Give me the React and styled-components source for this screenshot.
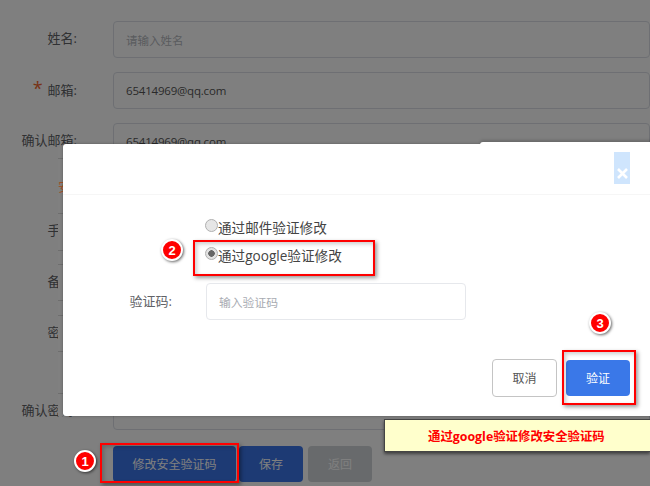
import React from "react"
import styled, { createGlobalStyle } from "styled-components"

const FONT = `"Open Sans", "Noto Sans CJK SC", "Liberation Sans", sans-serif`

const GlobalStyle = createGlobalStyle`
  html, body {
    margin: 0;
    padding: 0;
    width: 650px;
    height: 486px;
    overflow: hidden;
    background: #fff;
    font-family: ${FONT};
  }
  * {
    box-sizing: border-box;
  }
`

const Page = styled.div`
  position: relative;
  width: 650px;
  height: 486px;
  overflow: hidden;
`

const Form = styled.div`
  display: flex;
  flex-direction: column;
  gap: 14px;
  padding-top: 21px;
`

const Row = styled.div`
  display: flex;
  align-items: center;
  height: 37px;
  margin-top: ${(p) => p.$mt || 0}px;
`

const Label = styled.label`
  width: 77px;
  flex-shrink: 0;
  margin-top: -4px;
  text-align: right;
  font-size: 13px;
  color: #606266;
  white-space: nowrap;
`

const Star = styled.span`
  color: #f0662e;
  font-size: 18px;
  line-height: 1;
  margin-right: 5px;
`

const Field = styled.div`
  flex: 1;
  height: 37px;
  margin-left: 36px;
  padding-left: 12px;
  display: flex;
  align-items: center;
  border: 1px solid #dcdfe6;
  border-radius: 4px;
  font-size: 11.5px;
  letter-spacing: ${(p) => (p.$placeholder ? 0 : -0.2)}px;
  color: ${(p) => (p.$placeholder ? "#b4b7bd" : "#555")};
`

const Actions = styled.div`
  display: flex;
  gap: 3px;
  margin: 2px 0 0 113px;
`

const Button = styled.div`
  height: 36px;
  width: ${(p) => p.$w}px;
  margin-left: ${(p) => p.$ml || 0}px;
  border-radius: 4px;
  display: flex;
  align-items: center;
  justify-content: center;
  font-size: 12px;
  color: #fff;
  background: ${(p) => p.$bg};
`

const Overlay = styled.div`
  position: absolute;
  inset: 0;
  background: rgba(0, 0, 0, 0.5);
`

/* grey band down the left of the dialog, it cuts the labels off at x=58 */
const EdgeStrip = styled.div`
  position: absolute;
  left: 58px;
  top: 147px;
  width: 5px;
  height: 269px;
  overflow: hidden;
  background: #808080;
`

const Tick = styled.div`
  position: absolute;
  left: 0;
  top: ${(p) => p.$y - 147}px;
  width: 5px;
  height: 1px;
  background: #6e6e6e;
`

const EdgeGlyph = styled.span`
  position: absolute;
  left: 0;
  top: 30px;
  font-size: 13px;
  line-height: 18px;
  color: #a0522a;
`

const Modal = styled.div`
  position: absolute;
  left: 63px;
  top: 144px;
  width: 600px;
  height: 272px;
  background: #fff;
  border-radius: 3px;
  box-shadow: 0 0 3px rgba(0, 0, 0, 0.3);
  display: flex;
  flex-direction: column;
  &::before {
    content: "";
    position: absolute;
    left: 417px;
    right: 0;
    top: -2px;
    height: 3px;
    background: #fff;
    border-radius: 3px 0 0 0;
    box-shadow: 0 -2px 3px rgba(0, 0, 0, 0.18);
  }
`

const ModalHeader = styled.div`
  height: 51px;
  flex-shrink: 0;
  border-bottom: 1px solid #f6f6f6;
  display: flex;
  justify-content: flex-end;
  padding: 8px 33px 0 0;
`

const Close = styled.div`
  width: 16px;
  height: 32px;
  background: #cfe5fd;
  color: #fff;
  display: flex;
  align-items: flex-end;
  justify-content: center;
  padding-bottom: 4px;
`

const ModalBody = styled.div`
  flex: 1;
  padding: 18px 20px 0 0;
  display: flex;
  flex-direction: column;
`

const RadioRow = styled.div`
  display: flex;
  align-items: center;
  height: 28px;
  margin-left: 142px;
  font-size: 13.6px;
  color: #444;
`

const Radio = styled.span`
  width: 13px;
  height: 13px;
  border-radius: 50%;
  border: 1px solid #b0b0b0;
  background: ${(p) =>
    p.$on ? "radial-gradient(circle, #666 0 3px, #e2e2e2 3.5px)" : "#e6e6e6"};
  margin-top: -3px;
`

const CodeRow = styled.div`
  display: flex;
  align-items: center;
  margin-top: 14px;
`

const CodeLabel = styled.label`
  width: 109px;
  margin-top: -2px;
  text-align: right;
  font-size: 13px;
  color: #606266;
`

const CodeInput = styled.div`
  width: 260px;
  height: 37px;
  margin-left: 34px;
  padding-left: 12px;
  display: flex;
  align-items: center;
  border: 1px solid #e6e8ec;
  border-radius: 4px;
  font-size: 11.8px;
  color: #a8abb2;
`

const ModalFooter = styled.div`
  display: flex;
  align-items: center;
  gap: 9px;
  margin: 39px 0 0 429px;
`

const CancelButton = styled.div`
  width: 65px;
  height: 38px;
  border: 1px solid #c4c4c4;
  border-radius: 4px;
  display: flex;
  align-items: center;
  justify-content: center;
  font-size: 12px;
  color: #555;
`

const ConfirmButton = styled.div`
  width: 64px;
  height: 36px;
  border-radius: 4px;
  background: #3a78e8;
  display: flex;
  align-items: center;
  justify-content: center;
  font-size: 12px;
  color: #fff;
`

const RedBox = styled.div`
  position: absolute;
  left: ${(p) => p.$x}px;
  top: ${(p) => p.$y}px;
  width: ${(p) => p.$w}px;
  height: ${(p) => p.$h}px;
  border: 2.5px solid #f00;
  box-shadow: 2px 2px 4px rgba(0, 0, 0, 0.4), inset 2px 2px 4px rgba(0, 0, 0, 0.2);
`

const Badge = styled.div`
  position: absolute;
  left: ${(p) => p.$x - 11}px;
  top: ${(p) => p.$y - 11}px;
  width: 22px;
  height: 22px;
  border-radius: 50%;
  background: #f00;
  border: 2.5px solid #fff;
  box-shadow: 1px 1px 3px rgba(0, 0, 0, 0.6);
  color: #fff;
  font-family: "Liberation Sans", sans-serif;
  font-weight: 700;
  font-size: 13px;
  display: flex;
  align-items: center;
  justify-content: center;
`

const Note = styled.div`
  position: absolute;
  left: 384px;
  top: 419px;
  width: 266px;
  height: 33px;
  padding-left: 43px;
  background: #ffc;
  border: 1px solid #444;
  border-right: 0;
  box-shadow: 0 2px 3px rgba(0, 0, 0, 0.5);
  color: #f00;
  font-weight: 700;
  font-size: 12.4px;
  display: flex;
  align-items: center;
`

const rows = [
  { label: "姓名:", value: "请输入姓名", placeholder: true },
  { label: "邮箱:", value: "65414969@qq.com", required: true },
  { label: "确认邮箱:", value: "65414969@qq.com" },
  { label: "安:", mt: -6 },
  { label: "手机:", mt: -6 },
  { label: "备注:" },
  { label: "密码:" },
  { label: "确认密码:", mt: 27 },
]

const ticks = [158, 213, 250, 264, 300, 315, 351, 393]

const App = () => {
  return (
    <Page>
      <GlobalStyle />
      <Form>
        {rows.map((row) => (
          <Row key={row.label} $mt={row.mt}>
            <Label>
              {row.required && <Star>*</Star>}
              {row.label}
            </Label>
            <Field $placeholder={row.placeholder}>{row.value}</Field>
          </Row>
        ))}
        <Actions>
          <Button $w={123} $bg="#3a74e8">修改安全验证码</Button>
          <Button $w={64} $bg="#3a74e8">保存</Button>
          <Button $w={64} $ml={2} $bg="#d0d4d8">返回</Button>
        </Actions>
      </Form>
      <Overlay />
      <EdgeStrip>
        {ticks.map((y) => (
          <Tick key={y} $y={y} />
        ))}
        <EdgeGlyph>安</EdgeGlyph>
      </EdgeStrip>
      <Modal>
        <ModalHeader>
          <Close>
            <svg width="13" height="13" viewBox="0 0 13 13">
              <path d="M2 2l9 9M11 2l-9 9" stroke="#fff" strokeWidth="2.6" />
            </svg>
          </Close>
        </ModalHeader>
        <ModalBody>
          <RadioRow>
            <Radio />
            通过邮件验证修改
          </RadioRow>
          <RadioRow>
            <Radio $on />
            通过google验证修改
          </RadioRow>
          <CodeRow>
            <CodeLabel>验证码:</CodeLabel>
            <CodeInput>输入验证码</CodeInput>
          </CodeRow>
          <ModalFooter>
            <CancelButton>取消</CancelButton>
            <ConfirmButton>验证</ConfirmButton>
          </ModalFooter>
        </ModalBody>
      </Modal>
      <RedBox $x={193} $y={240} $w={182} $h={36} />
      <RedBox $x={562} $y={350} $w={74} $h={55} />
      <RedBox $x={100} $y={443} $w={139} $h={40} />
      <Badge $x={172} $y={250}>2</Badge>
      <Badge $x={600} $y={323}>3</Badge>
      <Badge $x={85} $y={461}>1</Badge>
      <Note>通过google验证修改安全验证码</Note>
    </Page>
  )
}

export default App
